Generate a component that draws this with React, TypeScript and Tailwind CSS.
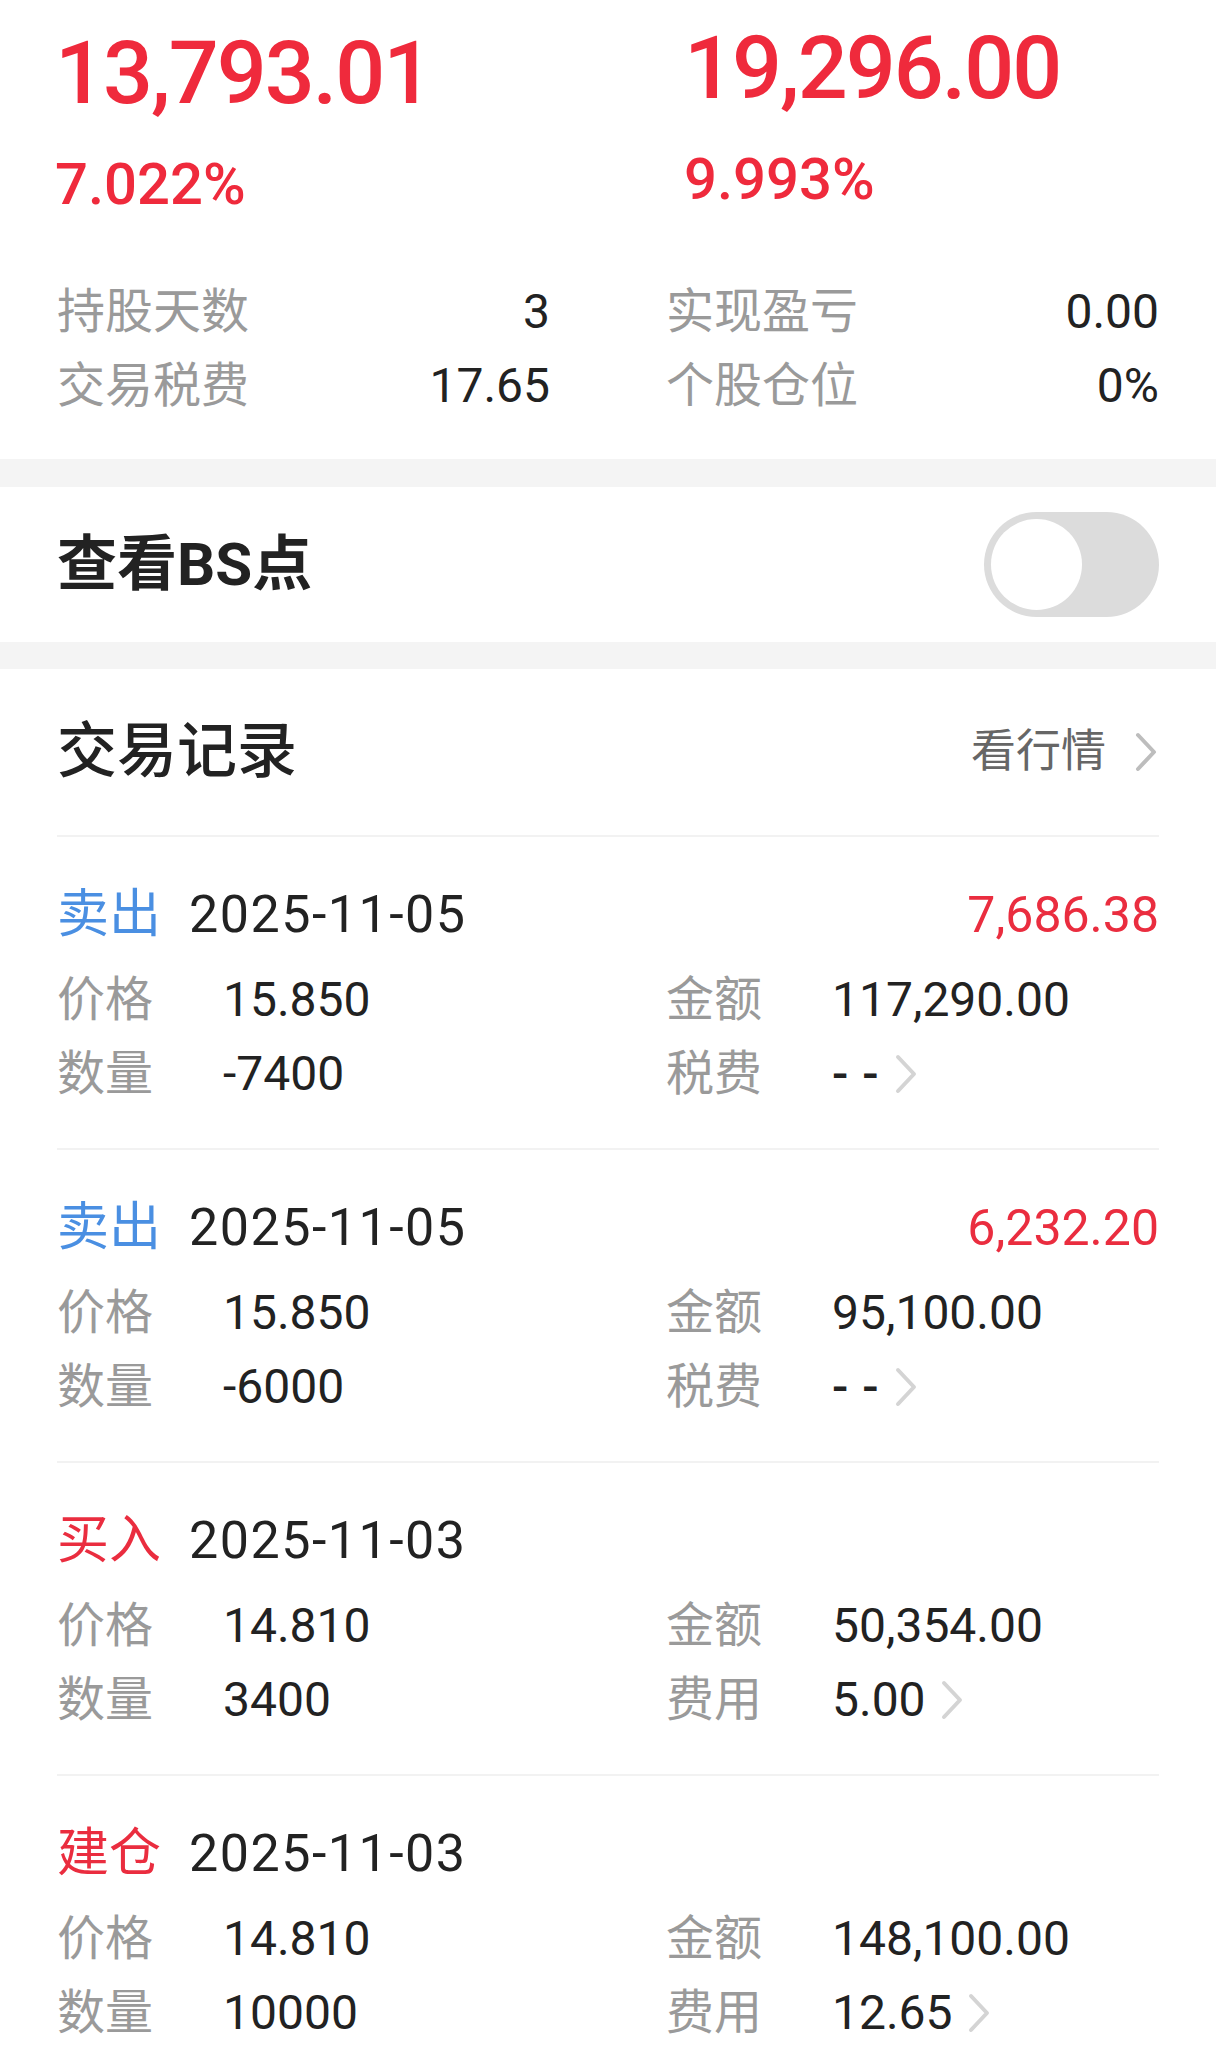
import React from "react";

type Trade = {
  kind: string;
  kindColor: string;
  date: string;
  profit?: string;
  price: string;
  qty: string;
  amount: string;
  feeLabel: string;
  fee: string;
};

const trades: Trade[] = [
  { kind: "卖出", kindColor: "text-[#4a8fe2]", date: "2025-11-05", profit: "7,686.38", price: "15.850", qty: "-7400", amount: "117,290.00", feeLabel: "税费", fee: "--" },
  { kind: "卖出", kindColor: "text-[#4a8fe2]", date: "2025-11-05", profit: "6,232.20", price: "15.850", qty: "-6000", amount: "95,100.00", feeLabel: "税费", fee: "--" },
  { kind: "买入", kindColor: "text-[#ea2d3f]", date: "2025-11-03", price: "14.810", qty: "3400", amount: "50,354.00", feeLabel: "费用", fee: "5.00" },
  { kind: "建仓", kindColor: "text-[#ea2d3f]", date: "2025-11-03", price: "14.810", qty: "10000", amount: "148,100.00", feeLabel: "费用", fee: "12.65" },
];

const Chevron = ({ color = "#d4d4d4" }: { color?: string }) => (
  <svg width="25" height="40" viewBox="0 0 25 40" fill="none">
    <polyline points="4,3 20,20 4,37" stroke={color} strokeWidth="4" strokeLinecap="round" strokeLinejoin="round" />
  </svg>
);

const Stat = ({ label, value }: { label: string; value: string }) => (
  <div className="flex items-center justify-between leading-[74px]">
    <span className="text-[48px] text-[#9a9a9a]">{label}</span>
    <span className="text-[48px] text-[#222]">{value}</span>
  </div>
);

const Field = ({ label, value, more }: { label: string; value: string; more?: boolean }) => (
  <div className="flex items-center leading-[74px]">
    <span className="w-[166px] text-[48px] text-[#9a9a9a]">{label}</span>
    {value === "--" ? (
      <span className="text-[48px] font-medium tracking-[14px] text-[#222]">{value}</span>
    ) : (
      <span className="text-[48px] text-[#222]">{value}</span>
    )}
    {more && (
      <span className={value === "--" ? "ml-[1px] flex items-center" : "ml-[14px] flex items-center"}>
        <Chevron />
      </span>
    )}
  </div>
);

const TradeRow = ({ t }: { t: Trade }) => (
  <div className="border-t-2 border-[#f2f2f2] pt-[41px] pb-[37px]">
    <div className="flex h-[74px] items-center">
      <span className={`text-[52px] ${t.kindColor}`}>{t.kind}</span>
      <span className="ml-[28px] text-[52px] tracking-[1.5px] text-[#222]">{t.date}</span>
      {t.profit && <span className="ml-auto text-[50px] text-[#ea2d3f]">{t.profit}</span>}
    </div>
    <div className="mt-[11px] grid grid-cols-2 gap-x-[116px]">
      <Field label="价格" value={t.price} />
      <Field label="金额" value={t.amount} />
      <Field label="数量" value={t.qty} />
      <Field label={t.feeLabel} value={t.fee} more />
    </div>
  </div>
);

export default function App() {
  return (
    <div className="w-[1216px] h-[2055px] overflow-hidden bg-white font-['Roboto','Noto_Sans_CJK_SC',sans-serif]">
      <section className="pt-[23px] pb-[36px]">
        <div className="flex font-medium text-[#ef2a3c]">
          <div className="w-[684px] pl-[55px]">
            <div className="text-[88px] leading-[100px] tracking-[-2px]">13,793.01</div>
            <div className="mt-[31px] text-[58px] leading-[60px]">7.022%</div>
          </div>
          <div className="-mt-[5px]">
            <div className="text-[88px] leading-[100px] tracking-[-2px]">19,296.00</div>
            <div className="mt-[31px] text-[58px] leading-[60px]">9.993%</div>
          </div>
        </div>
        <div className="mt-[61px] grid grid-cols-2 gap-x-[116px] px-[57px]">
          <div>
            <Stat label="持股天数" value="3" />
            <Stat label="交易税费" value="17.65" />
          </div>
          <div>
            <Stat label="实现盈亏" value="0.00" />
            <Stat label="个股仓位" value="0%" />
          </div>
        </div>
      </section>

      <div className="h-[28px] bg-[#f4f4f4]" />

      <div className="flex h-[155px] items-center justify-between px-[57px]">
        <span className="text-[60px] font-bold text-[#222]">查看BS点</span>
        <div className="h-[105px] w-[175px] rounded-full bg-[#dcdcdc] p-[7px]">
          <div className="h-[91px] w-[91px] rounded-full bg-white" />
        </div>
      </div>

      <div className="h-[27px] bg-[#f4f4f4]" />

      <div className="flex h-[166px] items-center justify-between px-[57px]">
        <span className="text-[60px] font-medium text-[#222]">交易记录</span>
        <div className="flex items-center">
          <span className="text-[45px] text-[#666]">看行情</span>
          <span className="ml-[28px] flex items-center">
            <Chevron color="#bdbdbd" />
          </span>
        </div>
      </div>

      <div className="px-[57px]">
        {trades.map((t, i) => (
          <TradeRow key={i} t={t} />
        ))}
      </div>
    </div>
  );
}
